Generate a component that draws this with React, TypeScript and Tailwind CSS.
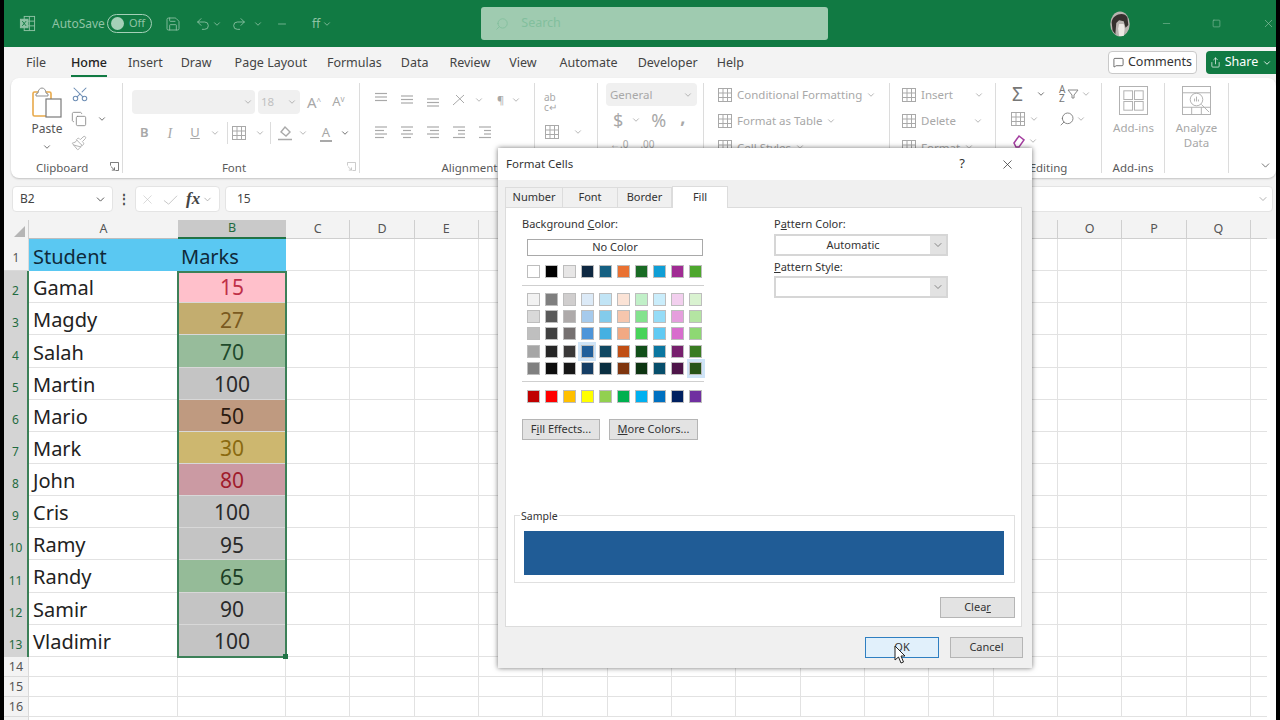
import { ChevronDown, Copy, MessageSquare, Minus, Paintbrush, Redo2, Save, Scissors, Search, Share, Square, Undo2, X } from 'lucide-react';
import type { ReactNode } from 'react';

const Chev = ({ className = 'text-[#a8a8a8]' }: { className?: string }) => <ChevronDown className={'h-[10px] w-[10px] shrink-0 ' + className} strokeWidth={2} />;

// text alignment glyph: three lines, widths in viewBox units
function Lines({ rows, y = 3 }: { rows: [number, number][]; y?: number }) {
  return (
    <svg viewBox="0 0 16 16" className="h-4 w-4 shrink-0" stroke="#a9a9a9" strokeWidth="1.2">
      {rows.map(([a, b], i) => <line key={i} x1={a} x2={b} y1={y + i * 3.5} y2={y + i * 3.5} />)}
    </svg>
  );
}

const GridIcon = ({ size = 'h-4 w-4' }: { size?: string }) => (
  <svg viewBox="0 0 16 16" className={size + ' shrink-0'} fill="none" stroke="#a9a9a9" strokeWidth="1">
    <rect x="1.5" y="1.5" width="13" height="13" />
    <path d="M1.5 6h13M1.5 10.5h13M6 1.5v13M10.5 1.5v13" />
  </svg>
);

function PasteIcon() {
  return (
    <svg viewBox="0 0 30 32" className="h-8 w-[30px]" fill="none">
      <rect x="1" y="5" width="18" height="24" rx="1.5" stroke="#e8a94a" strokeWidth="1.6" />
      <path d="M6 6c0-3 2-5 4-5s4 2 4 5l2 1v2H4V7z" fill="#fff" stroke="#8f8f8f" strokeWidth="1" />
      <rect x="14" y="12" width="15" height="18" fill="#fff" stroke="#7a7a7a" strokeWidth="1.2" />
    </svg>
  );
}

function ExcelLogo() {
  return (
    <svg viewBox="0 0 18 18" className="h-[17px] w-[17px]" fill="none" stroke="#8fc3a5" strokeWidth="1">
      <rect x="5.5" y="1.5" width="11" height="15" />
      <path d="M5.5 6.5h11M5.5 11.5h11M11 1.5v15" />
      <rect x="1.5" y="4.5" width="8" height="9" fill="#8fc3a5" />
      <path d="M3.5 6.5l4 5M7.5 6.5l-4 5" stroke="#117a43" />
    </svg>
  );
}

function Launcher({ color = '#777' }: { color?: string }) {
  return (
    <svg viewBox="0 0 10 10" className="absolute bottom-[2px] right-[3px] h-[9px] w-[9px]" fill="none" stroke={color} strokeWidth="1">
      <path d="M.5 4V.5h9v9H6M1 5l4 4M5 6v3H2" />
    </svg>
  );
}

function Group({ w, label, labelClass = 'justify-center', launcher, children }: { w: string; label?: string; labelClass?: string; launcher?: string; children: ReactNode }) {
  return (
    <div className={w + ' relative my-[5px] flex shrink-0 flex-col border-r border-[#dcdcdc]'}>
      <div className="h-[78px] shrink-0">{children}</div>
      <div className={'flex h-[14px] items-center text-[11.5px] text-[#5a5a5a] ' + labelClass}>{label}</div>
      {launcher && <Launcher color={launcher} />}
    </div>
  );
}

function TitleBar() {
  return (
    <div className="flex h-[47px] shrink-0 items-center bg-[#117a43] text-[12px] text-[#8fc3a5]">
      <div className="ml-[15px] w-[33px]"><ExcelLogo /></div>
      <span className="w-[55px]">AutoSave</span>
      <div className="flex h-[19px] w-[45px] items-center gap-[5px] rounded-full border border-[#a5d0b8] pl-[3px] text-[11px]">
        <span className="h-[13px] w-[13px] rounded-full bg-[#a5d0b8]" />Off
      </div>
      <Save className="ml-[13px] h-4 w-4" strokeWidth={1.3} />
      <Undo2 className="ml-[14px] h-4 w-4" strokeWidth={1.3} />
      <Chev className="ml-[1px] text-[#8fc3a5]" />
      <Redo2 className="ml-[9px] h-4 w-4" strokeWidth={1.3} />
      <Chev className="ml-[6px] text-[#8fc3a5]" />
      <Minus className="ml-[13px] h-3 w-3" strokeWidth={1.5} />
      <span className="ml-[24px]">ff</span>
      <Chev className="ml-[2px] text-[#8fc3a5]" />
      <div className="ml-[149px] flex h-[33px] w-[347px] items-center gap-[12px] rounded-[3px] bg-[#9fcbb0] pl-[14px] text-[#82bf9d]">
        <Search className="h-[14px] w-[14px] -scale-x-100" strokeWidth={1.5} />
        <span className="text-[12.5px]">Search</span>
      </div>
      <svg viewBox="0 0 22 28" className="ml-[281px] h-[26px] w-[22px]">
        <ellipse cx="11" cy="14" rx="10.5" ry="13.5" fill="#b9b4b0" />
        <path d="M2 12C3 3 16 0 19 7l1 8-3 3-2-7-5-1-3 3-1 12-3-4z" fill="#35302e" />
        <path d="M10 14h5l1 5-1 8h-5l-1-8z" fill="#ece8e4" />
      </svg>
      <Minus className="ml-[30px] h-[11px] w-[11px]" strokeWidth={1.2} />
      <Square className="ml-[40px] h-[9px] w-[9px]" strokeWidth={1.5} />
      <X className="ml-[41px] h-[13px] w-[13px]" strokeWidth={1.2} />
    </div>
  );
}

const tabs: [string, string][] = [
  ['File', ''],
  ['Home', 'ml-[25px]'],
  ['Insert', 'ml-[21px]'],
  ['Draw', 'ml-[18px]'],
  ['Page Layout', 'ml-[23px]'],
  ['Formulas', 'ml-[20px]'],
  ['Data', 'ml-[19px]'],
  ['Review', 'ml-[21px]'],
  ['View', 'ml-[19px]'],
  ['Automate', 'ml-[23px]'],
  ['Developer', 'ml-[20px]'],
  ['Help', 'ml-[19px]'],
];

function TabsRow() {
  return (
    <div className="flex h-[31px] shrink-0 items-center bg-[#f3f3f3] pl-[22px] text-[12.5px] text-[#444]">
      <div className="flex pt-[1px]">
        {tabs.map(([t, cls]) => (
          <span key={t} className={cls + (t === 'Home' ? ' relative font-medium text-[#222]' : '')}>
            {t}
            {t === 'Home' && <span className="absolute -bottom-[5px] left-0 right-0 h-[2px] bg-[#117a43]" />}
          </span>
        ))}
      </div>
      <div className="ml-auto flex h-[23px] w-[89px] items-center justify-center gap-[4px] rounded-[4px] border border-[#c9c9c9] bg-white text-[12.5px] text-[#333]">
        <MessageSquare className="h-[11px] w-[11px]" strokeWidth={1.5} />Comments
      </div>
      <div className="ml-[9px] flex h-[23px] w-[70px] items-center justify-center gap-[4px] rounded-l-[4px] bg-[#117a43] text-[12.5px] text-white">
        <Share className="h-[11px] w-[11px]" strokeWidth={1.5} />Share<Chev className="text-white" />
      </div>
    </div>
  );
}

function Ribbon() {
  return (
    <div className="ml-[7px] flex h-[100px] shrink-0 rounded-lg bg-white text-[11.5px] text-[#a8a8a8] shadow-[0_1px_2px_rgba(0,0,0,0.2)]">
      <Group w="w-[112px]" label="Clipboard" labelClass="pl-[25px]" launcher="#666">
        <div className="flex pl-[21px] pt-[4px]">
          <div className="flex w-[30px] flex-col items-center">
            <PasteIcon />
            <span className="mt-[1px] text-[12px] text-[#555]">Paste</span>
            <Chev className="mt-[4px] text-[#555]" />
          </div>
          <div className="ml-[9px] flex flex-col gap-[8px]">
            <Scissors className="-mt-[2px] h-[18px] w-[18px] -rotate-90 text-[#6f8fb5]" strokeWidth={1.4} />
            <div className="flex items-center gap-[10px]"><Copy className="h-[16px] w-[16px] text-[#888]" strokeWidth={1.3} /><Chev className="text-[#555]" /></div>
            <Paintbrush className="h-[16px] w-[16px] text-[#b5b5b5]" strokeWidth={1.5} />
          </div>
        </div>
      </Group>
      <Group w="w-[237px]" label="Font" labelClass="justify-center pr-[14px]" launcher="#c4c4c4">
        <div className="flex flex-col pl-[9px] pt-[7px]">
          <div className="flex items-center">
            <div className="flex h-[24px] w-[123px] items-center justify-end rounded-[4px] bg-[#f0f0f0] pr-[2px]"><Chev /></div>
            <div className="ml-[3px] flex h-[24px] w-[42px] items-center justify-between rounded-[4px] bg-[#f0f0f0] px-[3px] text-[#c0c0c0]">18<Chev /></div>
            <span className="ml-[7px] text-[15px]">A<sup className="text-[8px]">^</sup></span>
            <span className="ml-[11px] text-[13px]">A<sup className="text-[8px]">v</sup></span>
          </div>
          <div className="mt-[8px] flex h-[22px] items-center pl-[8px] text-[13px]">
            <b className="font-semibold">B</b>
            <i className="ml-[19px] font-['Liberation_Serif',serif] text-[14px]">I</i>
            <u className="ml-[18px]">U</u>
            <Chev className="ml-[10px]" />
            <span className="ml-[7px] h-[22px] w-px bg-[#dcdcdc]" />
            <span className="ml-[3px]"><GridIcon /></span>
            <Chev className="ml-[8px]" />
            <span className="ml-[5px] h-[22px] w-px bg-[#dcdcdc]" />
            <svg viewBox="0 0 16 16" className="ml-[6px] h-4 w-4" fill="none" stroke="#a9a9a9"><path d="M8 2l5 5-4 4-5-4zM1 14.5h14" strokeWidth="1.4" /></svg>
            <Chev className="ml-[5px]" />
            <span className="ml-[12px] border-b-[2px] border-[#a9a9a9] px-[2px] text-[13px] leading-[15px]">A</span>
            <Chev className="ml-[8px] text-[#555]" />
          </div>
        </div>
      </Group>
      <Group w="w-[238px]" label="Alignment" labelClass="justify-center pr-[18px]">
        <div className="flex h-full">
          <div className="flex w-[175px] flex-col border-r border-[#dcdcdc] pl-[13px] pt-[9px]">
            <div className="flex items-center gap-[10px]">
              <Lines rows={[[2, 14], [2, 14], [2, 14]]} y={1.5} />
              <Lines rows={[[2, 14], [2, 14], [2, 14]]} y={4} />
              <Lines rows={[[2, 14], [2, 14], [2, 14]]} y={7} />
              <svg viewBox="0 0 16 16" className="h-4 w-4" fill="none" stroke="#a9a9a9"><path d="M2 13L13 3M5 3l8 8" /></svg>
              <Chev className="-ml-[3px]" />
              <span className="ml-[3px] text-[11px]">¶</span>
              <Chev className="-ml-[3px]" />
            </div>
            <div className="mt-[15px] flex items-center gap-[10px]">
              <Lines rows={[[2, 14], [2, 11], [2, 14], [2, 11]]} />
              <Lines rows={[[2, 14], [4, 12], [2, 14], [4, 12]]} />
              <Lines rows={[[2, 14], [5, 14], [2, 14], [5, 14]]} />
              <Lines rows={[[2, 14], [7, 14], [7, 14], [2, 14]]} />
              <Lines rows={[[2, 14], [7, 14], [7, 14], [2, 14]]} />
            </div>
          </div>
          <div className="flex flex-col items-start pl-[9px] pt-[9px]">
            <span className="text-[10px] leading-[10px]">ab<br />c↵</span>
            <div className="mt-[12px] flex items-center gap-[13px]"><GridIcon /><Chev /></div>
          </div>
        </div>
      </Group>
      <Group w="w-[106px]">
        <div className="flex flex-col pl-[8px]">
          <div className="flex h-[23px] w-[91px] items-center justify-between rounded-[4px] bg-[#f0f0f0] px-[4px]">General<Chev /></div>
          <div className="mt-[2px] flex h-[24px] items-center text-[18px]">
            <span className="ml-[7px]">$</span><Chev className="ml-[8px]" />
            <span className="ml-[10px]">%</span>
            <span className="ml-[14px] -mt-[6px] font-bold">,</span>
          </div>
          <div className="flex items-center gap-[12px] pl-[4px] pt-[5px] text-[10px]"><span>←.0</span><span>.00</span></div>
        </div>
      </Group>
      <Group w="w-[186px]">
        <div className="flex flex-col gap-[9px] pl-[13px] pt-[3px]">
          <div className="flex items-center gap-[4px]"><GridIcon />Conditional Formatting<Chev /></div>
          <div className="flex items-center gap-[4px]"><GridIcon />Format as Table<Chev /></div>
          <div className="flex items-center gap-[4px]"><GridIcon />Cell Styles<Chev /></div>
        </div>
      </Group>
      <Group w="w-[106px]">
        <div className="flex flex-col gap-[9px] pl-[11px] pt-[3px]">
          <div className="flex items-center gap-[4px]"><GridIcon />Insert<Chev className="ml-[17px]" /></div>
          <div className="flex items-center gap-[4px]"><GridIcon />Delete<Chev className="ml-[13px]" /></div>
          <div className="flex items-center gap-[4px]"><GridIcon />Format<Chev /></div>
        </div>
      </Group>
      <Group w="w-[106px]" label="Editing" labelClass="justify-center">
        <div className="grid grid-cols-[47px_1fr] gap-y-[7px] pl-[16px] pt-[1px] text-[#777]">
          <div className="flex items-center gap-[13px] text-[19px] leading-[20px]">Σ<Chev className="text-[#555]" /></div>
          <div className="flex items-center gap-[2px] text-[10px]"><span className="leading-[9px]">A<br />Z</span><svg viewBox="0 0 12 12" className="h-3 w-3" fill="none" stroke="#888"><path d="M1 2h10L7 7v3H5V7z" /></svg><Chev /></div>
          <div className="-ml-[2px] flex items-center gap-[3px]"><GridIcon /><Chev /></div>
          <div className="flex items-center gap-[1px]"><Search className="h-4 w-4 -scale-x-100" strokeWidth={1.3} /><Chev /></div>
          <div className="flex items-center gap-[2px]"><svg viewBox="0 0 14 14" className="h-[14px] w-[14px]" fill="none" stroke="#a43ea0" strokeWidth="1.5"><path d="M2 9l5-7 5 4-5 7H4z" /></svg><Chev /></div>
        </div>
      </Group>
      <Group w="w-[63px]" label="Add-ins">
        <div className="flex flex-col items-center pl-[1px] pt-[3px]">
          <svg viewBox="0 0 30 30" className="h-[29px] w-[29px]" fill="none" stroke="#b0b0b0"><rect x=".5" y=".5" width="29" height="29" /><rect x="5" y="5" width="9" height="9" /><rect x="16" y="5" width="9" height="9" /><rect x="5" y="16" width="9" height="9" /><rect x="16" y="16" width="9" height="9" /></svg>
          <span className="mt-[4px]">Add-ins</span>
        </div>
      </Group>
      <Group w="w-[64px]">
        <div className="flex flex-col items-center pt-[3px] leading-[15px]">
          <svg viewBox="0 0 30 30" className="h-[29px] w-[29px]" fill="none" stroke="#b0b0b0"><rect x=".5" y=".5" width="29" height="29" /><path d="M.5 7h29M.5 22h29M10 22v8M20 22v8" /><circle cx="15" cy="14" r="6.5" /><path d="M20 19l8 8M13 16v-3M15 16v-5M17 16v-2" /></svg>
          <span className="mt-[5px]">Analyze</span>
          <span>Data</span>
        </div>
      </Group>
      <div className="flex flex-1 items-end justify-end pb-[6px] pr-[4px]"><ChevronDown className="h-[13px] w-[13px] text-[#555]" strokeWidth={1.5} /></div>
    </div>
  );
}

function FormulaBar() {
  return (
    <div className="ml-[8px] mr-[3px] mt-[8px] flex h-[26px] shrink-0 items-center text-[12px] text-[#444]">
      <div className="flex h-full w-[101px] items-center justify-between rounded-[4px] border border-[#e4e4e4] bg-white pl-[7px] pr-[5px]">B2<ChevronDown className="h-[13px] w-[13px] text-[#555]" strokeWidth={1.8} /></div>
      <span className="w-[22px] text-center font-bold leading-none">⋮</span>
      <div className="flex h-full w-[85px] items-center gap-[8px] rounded-[4px] border border-[#e4e4e4] bg-white pl-[4px]">
        <X className="h-[15px] w-[15px] text-[#c4c4c4]" strokeWidth={1} />
        <svg viewBox="0 0 16 16" className="h-[15px] w-[15px]" fill="none" stroke="#c4c4c4"><path d="M1 9l5 4 9-9" /></svg>
        <i className="font-['Liberation_Serif',serif] text-[17px] font-bold text-[#444]">fx</i>
        <ChevronDown className="-ml-[6px] h-[11px] w-[11px] text-[#999]" strokeWidth={1.5} />
      </div>
      <div className="ml-[5px] flex h-full flex-1 items-center justify-between rounded-[4px] border border-[#e4e4e4] bg-white pl-[11px] pr-[3px]">15<ChevronDown className="h-[12px] w-[12px] text-[#999]" strokeWidth={1.5} /></div>
    </div>
  );
}

type Row = { n: number; name: string; v: number; bg: string; fg: string };
const rows: Row[] = [
  { n: 2, name: 'Gamal', v: 15, bg: 'bg-[#ffc0cb]', fg: 'text-[#bf3048]' },
  { n: 3, name: 'Magdy', v: 27, bg: 'bg-[#c3ad6f]', fg: 'text-[#7a5a1f]' },
  { n: 4, name: 'Salah', v: 70, bg: 'bg-[#97bc9b]', fg: 'text-[#1f4a2b]' },
  { n: 5, name: 'Martin', v: 100, bg: 'bg-[#c4c4c4]', fg: 'text-[#2a2a2a]' },
  { n: 6, name: 'Mario', v: 50, bg: 'bg-[#bf9a80]', fg: 'text-[#2b1a10]' },
  { n: 7, name: 'Mark', v: 30, bg: 'bg-[#cdb76f]', fg: 'text-[#8a6a10]' },
  { n: 8, name: 'John', v: 80, bg: 'bg-[#cb9aa3]', fg: 'text-[#a01c2c]' },
  { n: 9, name: 'Cris', v: 100, bg: 'bg-[#c4c4c4]', fg: 'text-[#2a2a2a]' },
  { n: 10, name: 'Ramy', v: 95, bg: 'bg-[#c4c4c4]', fg: 'text-[#2a2a2a]' },
  { n: 11, name: 'Randy', v: 65, bg: 'bg-[#95bb98]', fg: 'text-[#1c3f25]' },
  { n: 12, name: 'Samir', v: 90, bg: 'bg-[#c4c4c4]', fg: 'text-[#2a2a2a]' },
  { n: 13, name: 'Vladimir', v: 100, bg: 'bg-[#c4c4c4]', fg: 'text-[#2a2a2a]' },
];
const restCols = ['C', 'D', 'E', 'F', 'G', 'H', 'I', 'J', 'K', 'L', 'M', 'N', 'O', 'P', 'Q'];

function EmptyCells() {
  return (
    <>
      {restCols.map(c => <div key={c} className="w-[64.33px] shrink-0 border-b border-r border-[#e2e2e2]" />)}
      <div className="w-[16px] shrink-0 border-b border-[#e2e2e2]" />
    </>
  );
}

function Sheet() {
  return (
    <div className="relative mt-[8px] flex min-h-0 flex-1 flex-col overflow-hidden bg-white text-[20px] text-[#222]">
      <div className="flex h-[19px] shrink-0 bg-[#f3f3f3] text-[12.5px] text-[#555]">
        <div className="flex w-[25px] shrink-0 items-end justify-end border-r border-[#cfcfcf] pb-[2px] pr-[3px]">
          <span className="h-0 w-0 border-b-[11px] border-l-[11px] border-b-[#b5b5b5] border-l-transparent" />
        </div>
        <div className="flex w-[149px] shrink-0 items-center justify-center border-b border-[#bdbdbd]">A</div>
        <div className="flex w-[108px] shrink-0 items-center justify-center border-b-2 border-[#217346] bg-[#c9c9c9] text-[#1f6b40]">B</div>
        {restCols.map(c => <div key={c} className="flex w-[64.33px] shrink-0 items-center justify-center border-b border-r border-[#cfcfcf]">{c}</div>)}
        <div className="w-[16px] shrink-0 border-b border-[#cfcfcf]" />
      </div>
      <div className="flex h-[32.15px] shrink-0">
        <div className="flex w-[25px] shrink-0 items-end justify-center border-b border-r border-[#dadada] bg-[#f3f3f3] pb-[3px] text-[12px] text-[#555]">1</div>
        <div className="flex w-[257px] shrink-0 items-center bg-[#5ac8f2] pt-[3px] text-[#0f2a3a]">
          <span className="w-[149px] pl-[4px]">Student</span><span className="pl-[3px]">Marks</span>
        </div>
        <EmptyCells />
      </div>
      {rows.map(r => (
        <div key={r.n} className="flex h-[32.15px] shrink-0">
          <div className="flex w-[25px] shrink-0 items-end justify-center border-r-2 border-[#3c8058] bg-[#d4d4d4] pb-[3px] text-[12px] text-[#1f6b40]">{r.n}</div>
          <div className="flex w-[149px] shrink-0 items-center border-b border-r border-[#e2e2e2] pl-[4px] pt-[3px]">{r.name}</div>
          <div className={'flex w-[108px] shrink-0 items-center justify-center border-b border-[#d8d8d8] pt-[3px] text-[21px] ' + r.bg + ' ' + r.fg}>{r.v}</div>
          <EmptyCells />
        </div>
      ))}
      {[14, 15, 16].map(n => (
        <div key={n} className="flex h-5 shrink-0">
          <div className="flex w-[25px] shrink-0 items-center justify-center border-b border-r border-[#dadada] bg-[#f3f3f3] pt-[3px] text-[12.5px] text-[#555]">{n}</div>
          <div className="w-[149px] shrink-0 border-b border-r border-[#e2e2e2]" />
          <div className="w-[108px] shrink-0 border-b border-r border-[#e2e2e2]" />
          <EmptyCells />
        </div>
      ))}
      <div className="flex h-5 shrink-0">
        <div className="w-[25px] shrink-0 border-r border-[#dadada] bg-[#f3f3f3]" />
      </div>
      {/* selection frame and fill handle sit over the cells */}
      <div className="pointer-events-none absolute left-[173px] top-[51px] h-[387px] w-[110px] border-2 border-[#3c8058]">
        <span className="absolute -bottom-[3px] -right-[3px] h-[5px] w-[5px] bg-[#217346]" />
      </div>
    </div>
  );
}

const themeTop = ['#ffffff', '#000000', '#e7e6e6', '#0e2841', '#156082', '#e97132', '#196b24', '#0f9ed5', '#a02b93', '#4ea72e'];
const tints = [
  ['#f2f2f2', '#7f7f7f', '#d0cece', '#dceaf7', '#c1e4f5', '#fbe3d6', '#c1f0c8', '#caedfb', '#f2cfee', '#d9f2d0'],
  ['#d9d9d9', '#595959', '#aeaaaa', '#a6caec', '#83cbeb', '#f6c6ad', '#83e28e', '#95dcf7', '#e59edd', '#b4e5a2'],
  ['#bfbfbf', '#404040', '#757070', '#4e95d9', '#45b0e1', '#f1a983', '#47d359', '#60caf3', '#d86dcd', '#8ed873'],
  ['#a6a6a6', '#262626', '#3a3838', '#215f9a', '#104862', '#c04f15', '#124f1a', '#0b76a0', '#77206d', '#3a7c22'],
  ['#808080', '#0d0d0d', '#171717', '#153d64', '#0a2f41', '#7f350e', '#0d3512', '#074e6b', '#4e1549', '#275317'],
];
const standard = ['#c00000', '#ff0000', '#ffc000', '#ffff00', '#92d050', '#00b050', '#00b0f0', '#0070c0', '#002060', '#7030a0'];

function Swatches({ colors, halo = [] }: { colors: string[]; halo?: number[] }) {
  return (
    <div className="grid h-[13px] w-[181px] grid-cols-10">
      {colors.map((c, i) => (
        <div key={i} className="relative flex h-[13px] w-[18.1px] justify-center">
          {halo.includes(i) && <span className="absolute -top-[3px] left-0 h-[19px] w-[18px] bg-[#cfe4f7]" />}
          <span className="relative h-[13px] w-[13px] border border-[#bdbdbd]" style={{ backgroundColor: c }} />
        </div>
      ))}
    </div>
  );
}

const dlgBtn = 'flex h-[21px] items-center justify-center border border-[#b5b5b5] bg-[#e3e3e3] text-[11px] text-[#333]';

function Combo({ text }: { text?: string }) {
  return (
    <div className="flex h-[22px] w-[174px] border-2 border-[#d6d6d6] bg-white text-[11px] text-[#333]">
      <span className="flex-1 text-center leading-[17px]">{text}</span>
      <span className="flex w-[16px] items-center justify-center bg-[#e2e2e2]"><ChevronDown className="h-[12px] w-[12px] text-[#666]" strokeWidth={1.5} /></span>
    </div>
  );
}

function FormatCells() {
  return (
    <div className="absolute left-[498px] top-[148px] z-10 flex h-[520px] w-[534px] flex-col bg-[#f0f0f0] text-[11px] text-[#333] shadow-[0_0_5px_rgba(0,0,0,0.55)]">
      <div className="flex h-[32px] shrink-0 items-center bg-white pl-[8px]">
        <span className="text-[11.5px]">Format Cells</span>
        <span className="ml-auto text-[13px]">?</span>
        <X className="ml-[35px] mr-[17px] h-[15px] w-[15px]" strokeWidth={1.2} />
      </div>
      <div className="ml-[7px] mt-[6px] flex h-[21px] items-end">
        <span className="flex h-[20px] w-[58px] items-center justify-center border-l border-r border-t border-[#dcdcdc]">Number</span>
        <span className="flex h-[20px] w-[55px] items-center justify-center border-r border-t border-[#dcdcdc]">Font</span>
        <span className="flex h-[20px] w-[54px] items-center justify-center border-r border-t border-[#dcdcdc]">Border</span>
        <span className="z-10 -mb-px flex h-[22px] w-[56px] items-center justify-center border-l border-r border-t border-[#dcdcdc] bg-white">Fill</span>
      </div>
      <div className="ml-[7px] h-[420px] w-[517px] border border-[#dcdcdc] bg-white">
        <div className="flex h-[307px]">
          <div className="w-[268px] pl-[16px] pt-[9px]">
            <div className="leading-[14px]">Background <u>C</u>olor:</div>
            <div className="ml-[5px] mt-[8px] flex h-[17px] w-[176px] items-center justify-center border border-[#a9a9a9]">No Color</div>
            <div className="ml-[2px] mt-[9px]"><Swatches colors={themeTop} /></div>
            <div className="mt-[7px] h-px w-[182px] bg-[#cfcfcf]" />
            <div className="ml-[2px] mt-[7px] flex flex-col gap-[4.2px]">
              <Swatches colors={tints[0]} />
              <Swatches colors={tints[1]} />
              <Swatches colors={tints[2]} />
              <Swatches colors={tints[3]} halo={[3]} />
              <Swatches colors={tints[4]} halo={[9]} />
            </div>
            <div className="mt-[6px] h-px w-[182px] bg-[#cfcfcf]" />
            <div className="ml-[2px] mt-[8px]"><Swatches colors={standard} /></div>
            <div className="mt-[16px] flex gap-[9px]">
              <span className={dlgBtn + ' w-[78px]'}>F<u>i</u>ll Effects...</span>
              <span className={dlgBtn + ' w-[89px]'}><u>M</u>ore Colors...</span>
            </div>
          </div>
          <div className="pt-[9px]">
            <div className="leading-[14px]">P<u>a</u>ttern Color:</div>
            <div className="mt-[3px]"><Combo text="Automatic" /></div>
            <div className="mt-[3px] leading-[16px]"><u>P</u>attern Style:</div>
            <div className="mt-[1px]"><Combo /></div>
          </div>
        </div>
        <div className="relative ml-[8px] h-[68px] w-[501px] border border-[#e0e0e0] pl-[9px] pt-[15px]">
          <span className="absolute -top-[7px] left-[5px] bg-white px-px text-[10.5px] leading-[14px]">Sample</span>
          <div className="h-[44px] w-[480px] bg-[#205c96]" />
        </div>
        <div className="flex justify-end pr-[6px] pt-[14px]">
          <span className={dlgBtn + ' w-[75px]'}>Clea<u>r</u></span>
        </div>
      </div>
      <div className="mt-[10px] flex justify-end gap-[11px] pr-[9px]">
        <span className="flex h-[21px] w-[74px] items-center justify-center border border-[#2f7fc1] bg-[#e1f0fb]">OK</span>
        <span className={dlgBtn + ' w-[73px]'}>Cancel</span>
      </div>
      <svg viewBox="0 0 12 20" className="absolute left-[396px] top-[497px] h-[20px] w-[12px]" fill="#fff" stroke="#222" strokeWidth="1">
        <path d="M1 1v14l3.5-3 2.5 6 2.5-1-2.5-6H11z" />
      </svg>
    </div>
  );
}

export default function App() {
  return (
    <div className="relative h-[720px] w-[1280px] overflow-hidden bg-black font-['Noto_Sans',sans-serif]">
      <div className="mx-[4px] flex h-full flex-col bg-[#f3f3f3]">
        <TitleBar />
        <TabsRow />
        <Ribbon />
        <FormulaBar />
        <Sheet />
      </div>
      <FormatCells />
    </div>
  );
}
